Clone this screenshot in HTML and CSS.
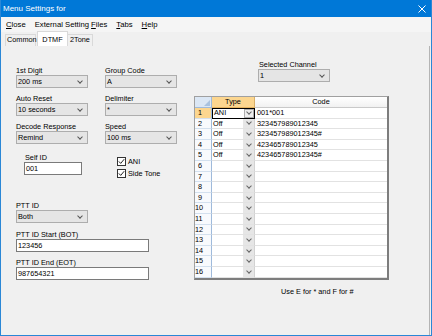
FILE: index.html
```html
<!DOCTYPE html>
<html lang="en">
<head>
  <meta charset="UTF-8">
  <title>Menu Settings for</title>
  <link rel="stylesheet" href="styles.css">
</head>
<body>
  <div class="window">
    <div class="titlebar">
      <span class="title">Menu Settings for</span>
      <svg class="close-x" width="8" height="8" viewBox="0 0 8 8"><path d="M0.5 0.5 L7.5 7.5 M7.5 0.5 L0.5 7.5" stroke="#fff" stroke-width="1"/></svg>
    </div>
    <div class="menubar">
      <span><u>C</u>lose</span>
      <span>External Setting <u>F</u>iles</span>
      <span><u>T</u>abs</span>
      <span><u>H</u>elp</span>
    </div>
    <div class="tabstrip">
      <div class="tab">Common</div>
      <div class="tab active">DTMF</div>
      <div class="tab">2Tone</div>
    </div>

    <div class="tabpage">
      <!-- left side: dtmf options -->
      <div class="col-left">
        <div class="field-grid">
          <div><div class="lbl">1st Digit</div><div class="combo">200 ms</div></div>
          <div><div class="lbl">Group Code</div><div class="combo">A</div></div>
          <div><div class="lbl">Auto Reset</div><div class="combo">10 seconds</div></div>
          <div><div class="lbl">Delimiter</div><div class="combo">*</div></div>
          <div><div class="lbl">Decode Response</div><div class="combo">Remind</div></div>
          <div><div class="lbl">Speed</div><div class="combo">100 ms</div></div>
        </div>

        <div class="id-row">
          <div class="selfid">
            <div class="lbl indent">Self ID</div>
            <div class="textbox">001</div>
          </div>
          <div class="checks">
            <div class="check"><span class="box"><svg width="7" height="7" viewBox="0 0 7 7"><polyline points="0.8,3.4 2.7,5.4 6.2,1.2" fill="none" stroke="#222" stroke-width="1"/></svg></span>ANI</div>
            <div class="check"><span class="box"><svg width="7" height="7" viewBox="0 0 7 7"><polyline points="0.8,3.4 2.7,5.4 6.2,1.2" fill="none" stroke="#222" stroke-width="1"/></svg></span>Side Tone</div>
          </div>
        </div>

        <div class="lbl ptt-first">PTT ID</div>
        <div class="combo">Both</div>
        <div class="lbl ptt-gap">PTT ID Start (BOT)</div>
        <div class="textbox wide">123456</div>
        <div class="lbl ptt-gap2">PTT ID End (EOT)</div>
        <div class="textbox wide">987654321</div>
      </div>

      <!-- right side: channel table -->
      <div class="col-right">
        <div class="channel">
          <div class="lbl indent">Selected Channel</div>
          <div class="combo">1</div>
        </div>

        <div class="dgv">
          <div class="dgv-head">
            <div class="corner"><svg width="6" height="6" viewBox="0 0 6 6"><polygon points="6,0 6,6 0,6" fill="#a9c2df"/></svg></div>
            <div class="hcell sel">Type</div>
            <div class="hcell">Code</div>
          </div>
          <div class="dgv-row">
            <div class="rh sel">1</div>
            <div class="editing"><span class="etext">ANI</span><span class="ebtn"></span></div>
            <div class="code">001*001</div>
          </div>
          <div class="dgv-row"><div class="rh">2</div><div class="type">Off</div><div class="dd"></div><div class="code">323457989012345</div></div>
          <div class="dgv-row"><div class="rh">3</div><div class="type">Off</div><div class="dd"></div><div class="code">323457989012345#</div></div>
          <div class="dgv-row"><div class="rh">4</div><div class="type">Off</div><div class="dd"></div><div class="code">423465789012345</div></div>
          <div class="dgv-row"><div class="rh">5</div><div class="type">Off</div><div class="dd"></div><div class="code">423465789012345#</div></div>
          <div class="dgv-row"><div class="rh">6</div><div class="type"></div><div class="dd"></div><div class="code"></div></div>
          <div class="dgv-row"><div class="rh">7</div><div class="type"></div><div class="dd"></div><div class="code"></div></div>
          <div class="dgv-row"><div class="rh">8</div><div class="type"></div><div class="dd"></div><div class="code"></div></div>
          <div class="dgv-row"><div class="rh">9</div><div class="type"></div><div class="dd"></div><div class="code"></div></div>
          <div class="dgv-row"><div class="rh">10</div><div class="type"></div><div class="dd"></div><div class="code"></div></div>
          <div class="dgv-row"><div class="rh">11</div><div class="type"></div><div class="dd"></div><div class="code"></div></div>
          <div class="dgv-row"><div class="rh">12</div><div class="type"></div><div class="dd"></div><div class="code"></div></div>
          <div class="dgv-row"><div class="rh">13</div><div class="type"></div><div class="dd"></div><div class="code"></div></div>
          <div class="dgv-row"><div class="rh">14</div><div class="type"></div><div class="dd"></div><div class="code"></div></div>
          <div class="dgv-row"><div class="rh">15</div><div class="type"></div><div class="dd"></div><div class="code"></div></div>
          <div class="dgv-row"><div class="rh">16</div><div class="type"></div><div class="dd"></div><div class="code"></div></div>
        </div>

        <div class="note">Use E for * and F for #</div>
      </div>
    </div>
  </div>
</body>
</html>
```

FILE: styles.css
```css
body {
  margin: 0;
  background: #f0f0f0;
  font-family: "Liberation Sans", Arial, sans-serif;
  color: #000;
}
.window {
  width: 432px;
  height: 336px;
  box-sizing: border-box;
  border: 1px solid #2a87d6;
  border-top: 0;
  display: flex;
  flex-direction: column;
  overflow: hidden;
}
/* Title bar */
.titlebar {
  height: 17px;
  background: #0078d7;
  display: flex;
  align-items: center;
  padding: 0 5px 0 2px;
  flex-shrink: 0;
}
.title { font-size: 8px; line-height: 17px; color: #fff; }
.close-x { margin-left: auto; }
/* Menu */
.menubar {
  height: 15px;
  display: flex;
  gap: 9px;
  padding-left: 5px;
  font-size: 7.7px;
  line-height: 15px;
  background: #f5f5f5;
  flex-shrink: 0;
}
/* Tabs */
.tabstrip {
  height: 14px;
  display: flex;
  align-items: flex-end;
  padding-left: 4px;
  flex-shrink: 0;
}
.tab {
  height: 12px;
  box-sizing: border-box;
  border: 1px solid #d9d9d9;
  border-bottom: 0;
  padding: 1px 1px 0;
  font-size: 7.3px;
  line-height: 8px;
  text-align: center;
  background: #f0f0f0;
}
.tab:first-child { width: 31px; margin-right: 1px; }
.tab.active {
  width: 31px;
  height: 15px;
  padding-top: 4px;
  background: #fff;
}
.tab:last-child { width: 25px; border-left: 0; }
.tabpage {
  flex: 1;
  display: flex;
  align-items: flex-start;
  padding-left: 15px;
  margin-right: 1px;
  border-right: 1px solid #b4b4b4;
  font-size: 7.3px;
}
/* Shared controls */
.lbl { line-height: 8px; height: 8px; white-space: nowrap; }
.lbl.indent { padding-left: 1px; }
.combo {
  width: 72px;
  height: 13px;
  box-sizing: border-box;
  border: 1px solid #adadad;
  background: #e5e5e5;
  padding-left: 1px;
  line-height: 11px;
  display: flex;
  align-items: center;
}
.combo::after {
  content: '';
  margin-left: auto;
  margin-right: 5px;
  margin-top: -2px;
  width: 3px;
  height: 3px;
  border-right: 1px solid #555;
  border-bottom: 1px solid #555;
  transform: rotate(45deg);
}
.textbox {
  height: 13px;
  box-sizing: border-box;
  border: 1px solid #7a7a7a;
  background: #fff;
  padding-left: 1px;
  line-height: 11px;
}
.textbox.wide { width: 133px; }
/* Left column */
.col-left { width: 162px; padding-top: 21px; }
.field-grid {
  display: grid;
  grid-template-columns: 72px 72px;
  column-gap: 17px;
  row-gap: 7px;
}
.id-row { display: flex; margin-top: 10px; }
.selfid { width: 58px; margin-left: 8px; }
.checks {
  margin-left: 35px;
  margin-top: 3px;
  display: flex;
  flex-direction: column;
  gap: 3px;
}
.check { display: flex; align-items: center; height: 9px; gap: 2px; white-space: nowrap; }
.box {
  width: 9px;
  height: 9px;
  box-sizing: border-box;
  border: 1px solid #333;
  background: #fff;
  display: flex;
  align-items: center;
  justify-content: center;
}
.ptt-first { margin-top: 24px; }
.ptt-gap { margin-top: 8px; }
.ptt-gap2 { margin-top: 7px; }
/* Right column */
.col-right { margin-left: 16px; padding-top: 15px; }
.channel { margin-left: 64px; }
.dgv {
  margin-top: 14px;
  width: 195px;
  box-sizing: border-box;
  border: 1px solid #a0a0a0;
  border-right: 2px solid #7d7d7d;
  border-bottom: 2px solid #7d7d7d;
  background: #fff;
}
.dgv-head {
  display: grid;
  grid-template-columns: 17px 43px 1fr;
  height: 11px;
}
.corner {
  background: #dbe7f5;
  border-right: 1px solid #9fbadb;
  border-bottom: 1px solid #9fbadb;
  display: flex;
  align-items: flex-end;
  justify-content: flex-end;
  padding: 0 1px 1px 0;
}
.hcell {
  line-height: 10px;
  text-align: center;
  background: linear-gradient(#ffffff, #f1f1f1);
  border-right: 1px solid #d5d5d5;
  border-bottom: 1px solid #c9c9c9;
}
.hcell:last-child { border-right: 0; }
.hcell.sel { background: #fcd68f; border-bottom-color: #e6b461; border-right-color: #d8b06a; }
.dgv-row {
  display: grid;
  grid-template-columns: 17px 31px 12px 1fr;
  height: 10.6px;
  line-height: 9.6px;
}
.dgv-row > div { border-bottom: 1px solid #e2e2e2; }
.rh {
  text-align: right;
  padding-right: 9px;
  background: #f8fafd;
  border-right: 1px solid #9fbadb;
}
.dgv-row > .rh { border-bottom-color: #d3e0ee; }
.rh.sel { background: #fcd68f; }
.type { padding-left: 1px; }
.dd {
  background: #e6e6e6;
  border-right: 1px solid #d2d2d2;
  display: flex;
  align-items: center;
  justify-content: center;
}
.dd::after, .ebtn::after {
  content: '';
  margin-top: -2px;
  width: 3px;
  height: 3px;
  border-right: 1px solid #666;
  border-bottom: 1px solid #666;
  transform: rotate(45deg);
}
.code { padding-left: 2px; white-space: nowrap; overflow: hidden; }
.dgv-row > .editing {
  grid-column: 2 / span 2;
  box-sizing: border-box;
  border: 1px solid #000;
  display: flex;
}
.etext { flex: 1; padding-left: 1px; line-height: 8.6px; }
.ebtn {
  width: 10px;
  box-sizing: border-box;
  border: 1px solid #adadad;
  background: #eee;
  display: flex;
  align-items: center;
  justify-content: center;
}
.note { margin-left: 87px; margin-top: 8px; line-height: 8px; white-space: nowrap; }
```
